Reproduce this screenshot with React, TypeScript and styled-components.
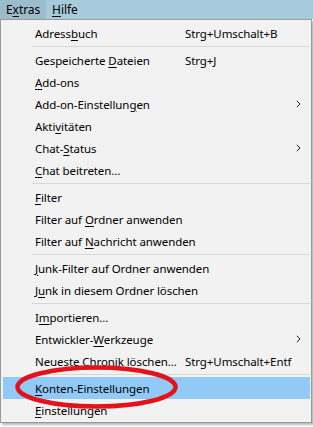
import React from "react";
import styled, { createGlobalStyle } from "styled-components";

type Entry =
  | { kind: "sep" }
  | {
      kind: "item";
      label: string;
      accessKey?: number;
      shortcut?: string;
      submenu?: boolean;
      selected?: boolean;
    };

const GlobalStyle = createGlobalStyle`
  html, body {
    margin: 0;
    padding: 0;
    background: #ffffff;
  }
  body {
    font-family: "Noto Sans", "Open Sans", sans-serif;
    font-size: 11.5px;
    letter-spacing: -0.08px;
    color: #000000;
  }
`;

const Page = styled.div`
  position: relative;
  width: 313px;
  height: 427px;
  overflow: hidden;
`;

const MenuBar = styled.div`
  display: flex;
  height: 19px;
  background: #a8cbdc;
`;

const MenuTitle = styled.div<{ $active?: boolean }>`
  padding: 0 6px;
  line-height: 19px;
  font-size: 12px;
  background: ${(p) => (p.$active ? "#9cbccc" : "transparent")};
`;

const Dropdown = styled.div`
  position: relative;
  width: 309px;
  padding: 2px 1px 1px 0;
  background: #f2f2f2;
  border: 1px solid #9a9a9a;
  box-shadow: 2px 2px 2px rgba(0, 0, 0, 0.28);
`;

const Item = styled.div<{ $selected?: boolean }>`
  display: flex;
  align-items: center;
  height: 22px;
  margin-left: 2px;
  padding: 0 9px 0 32px;
  background: ${(p) => (p.$selected ? "#91c9f7" : "transparent")};
`;

const Label = styled.span`
  width: 150px;
  white-space: nowrap;
`;

const Shortcut = styled.span`
  flex: 1;
  white-space: nowrap;
`;

const Key = styled.span`
  text-decoration: underline;
  text-underline-offset: 2px;
`;

const Arrow = styled.svg`
  width: 5px;
  height: 8px;
`;

const Separator = styled.div`
  height: 1px;
  margin: 2px 0 2px 31px;
  background: #d7d7d7;
`;

const Marker = styled.svg`
  position: absolute;
  left: 0;
  top: 0;
  pointer-events: none;
`;

const entries: Entry[] = [
  { kind: "item", label: "Adressbuch", accessKey: 6, shortcut: "Strg+Umschalt+B" },
  { kind: "sep" },
  { kind: "item", label: "Gespeicherte Dateien", accessKey: 13, shortcut: "Strg+J" },
  { kind: "item", label: "Add-ons", accessKey: 0 },
  { kind: "item", label: "Add-on-Einstellungen", accessKey: 17, submenu: true },
  { kind: "item", label: "Aktivitäten", accessKey: 4 },
  { kind: "item", label: "Chat-Status", accessKey: 5, submenu: true },
  { kind: "item", label: "Chat beitreten...", accessKey: 0 },
  { kind: "sep" },
  { kind: "item", label: "Filter", accessKey: 0 },
  { kind: "item", label: "Filter auf Ordner anwenden", accessKey: 11 },
  { kind: "item", label: "Filter auf Nachricht anwenden", accessKey: 11 },
  { kind: "sep" },
  { kind: "item", label: "Junk-Filter auf Ordner anwenden", accessKey: 0 },
  { kind: "item", label: "Junk in diesem Ordner löschen", accessKey: 1 },
  { kind: "sep" },
  { kind: "item", label: "Importieren...", accessKey: 1 },
  { kind: "item", label: "Entwickler-Werkzeuge", accessKey: 11, submenu: true },
  { kind: "item", label: "Neueste Chronik löschen...", shortcut: "Strg+Umschalt+Entf" },
  { kind: "sep" },
  { kind: "item", label: "Konten-Einstellungen", accessKey: 0, selected: true },
  { kind: "item", label: "Einstellungen", accessKey: 0 },
];

const withKey = (text: string, index?: number) => {
  if (index === undefined) return text;
  return (
    <>
      {text.slice(0, index)}
      <Key>{text[index]}</Key>
      {text.slice(index + 1)}
    </>
  );
};

const App = () => {
  return (
    <Page>
      <GlobalStyle />
      <MenuBar>
        <MenuTitle $active>{withKey("Extras", 1)}</MenuTitle>
        <MenuTitle>{withKey("Hilfe", 0)}</MenuTitle>
      </MenuBar>
      <Dropdown>
        {entries.map((e, i) =>
          e.kind === "sep" ? (
            <Separator key={i} />
          ) : (
            <Item key={i} $selected={e.selected}>
              <Label>{withKey(e.label, e.accessKey)}</Label>
              <Shortcut>{e.shortcut}</Shortcut>
              {e.submenu && (
                <Arrow viewBox="0 0 5 8">
                  <path d="M0.8 0.8 L4 4 L0.8 7.2" fill="none" stroke="#222" strokeWidth="1" />
                </Arrow>
              )}
            </Item>
          )
        )}
        <Marker width="313" height="410">
          <ellipse cx="95.5" cy="367" rx="79" ry="19.5" fill="none" stroke="#e3121b" strokeWidth="4.5" />
        </Marker>
      </Dropdown>
    </Page>
  );
};

export default App;
